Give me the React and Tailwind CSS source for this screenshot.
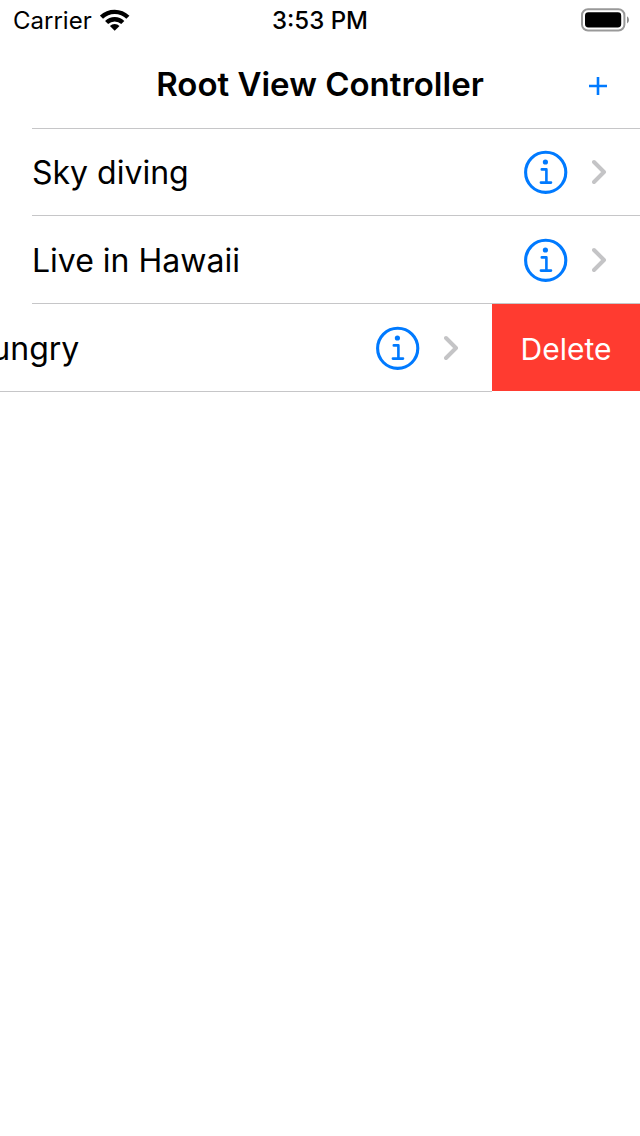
import React from "react";

function WifiIcon() {
  return (
    <svg width="30" height="22" viewBox="0 0 30 22" fill="none" stroke="#000" strokeWidth="4.4" aria-hidden="true">
      <path d="M1.5 8.2A18.9 18.9 0 0 1 27.9 8.2" />
      <path d="M6.6 13.5A11.6 11.6 0 0 1 22.8 13.5" />
      <path d="M14.7 21.8L9.9 17A6.9 6.9 0 0 1 19.5 17Z" fill="#000" stroke="none" />
    </svg>
  );
}

function BatteryIcon() {
  return (
    <svg width="49" height="24" viewBox="0 0 49 24" aria-hidden="true">
      <rect x="1" y="1.3" width="42.4" height="21.2" rx="6" fill="none" stroke="#999" strokeWidth="2" />
      <rect x="4" y="4.3" width="36.2" height="15.2" rx="3.4" fill="#000" />
      <path d="M46 8.2Q48 9.5 48 11.9T46 15.6Z" fill="#8c8c8c" />
    </svg>
  );
}

function InfoIcon() {
  return (
    <svg width="44" height="44" viewBox="0 0 44 44" fill="none" stroke="#007aff" aria-hidden="true">
      <circle cx="21.7" cy="22.3" r="20.1" strokeWidth="3.1" />
      <circle cx="21.4" cy="12" r="2.6" fill="#007aff" stroke="none" />
      <path d="M17.8 19.4H22.4V32.4M16.9 32.6H27" strokeWidth="2.6" strokeLinecap="round" strokeLinejoin="round" />
    </svg>
  );
}

function Chevron() {
  return (
    <svg width="16" height="26" viewBox="0 0 16 26" fill="none" stroke="#c4c4c6" strokeWidth="4" strokeLinecap="round" strokeLinejoin="round" aria-hidden="true">
      <path d="M2 3L12 13L2 23" />
    </svg>
  );
}

function RowContent({ title }) {
  return (
    <>
      <span className="flex-1 pt-0.5 text-[32px] leading-10 whitespace-nowrap">{title}</span>
      <button type="button" aria-label={`Details for ${title}`}>
        <InfoIcon />
      </button>
      <span className="ml-6">
        <Chevron />
      </span>
    </>
  );
}

function Row({ title }) {
  return (
    <li className="pl-8">
      <div className="flex h-[88px] items-center border-b border-[#c6c6c8] pr-8">
        <RowContent title={title} />
      </div>
    </li>
  );
}

function SwipedRow({ title }) {
  return (
    <li className="flex justify-end overflow-hidden">
      <div className="flex h-[88px] w-full shrink-0 items-center border-b border-[#c6c6c8] pr-8 pl-8">
        <RowContent title={title} />
      </div>
      <button type="button" className="mb-px w-[148px] shrink-0 bg-[#ff3b30] pt-0.5 text-3xl text-white">
        Delete
      </button>
    </li>
  );
}

export default function App() {
  return (
    <div className="min-h-screen bg-white font-['Inter',sans-serif] text-black">
      <div className="grid h-10 grid-cols-3 items-center px-[13px] text-2xl">
        <div className="flex items-center gap-2">
          <span className="pt-0.5">Carrier</span>
          <WifiIcon />
        </div>
        <time className="pt-0.5 text-center font-medium whitespace-nowrap">3:53 PM</time>
        <div className="-mr-[3px] flex justify-end">
          <BatteryIcon />
        </div>
      </div>
      <header className="grid h-[88px] grid-cols-[1fr_auto_1fr] items-center">
        <h1 className="col-start-2 text-[33px] leading-10 font-semibold">Root View Controller</h1>
        <button type="button" aria-label="Add" className="mr-8 justify-self-end pt-1">
          <svg width="20" height="20" viewBox="0 0 20 20" stroke="#007aff" strokeWidth="2.6" aria-hidden="true">
            <path d="M1 10H19M10 1V19" />
          </svg>
        </button>
      </header>
      <div className="ml-8 border-t border-[#c6c6c8]" />
      <ul className="-mt-px">
        <Row title="Sky diving" />
        <Row title="Live in Hawaii" />
        <SwipedRow title="Feed Hungry" />
      </ul>
    </div>
  );
}
